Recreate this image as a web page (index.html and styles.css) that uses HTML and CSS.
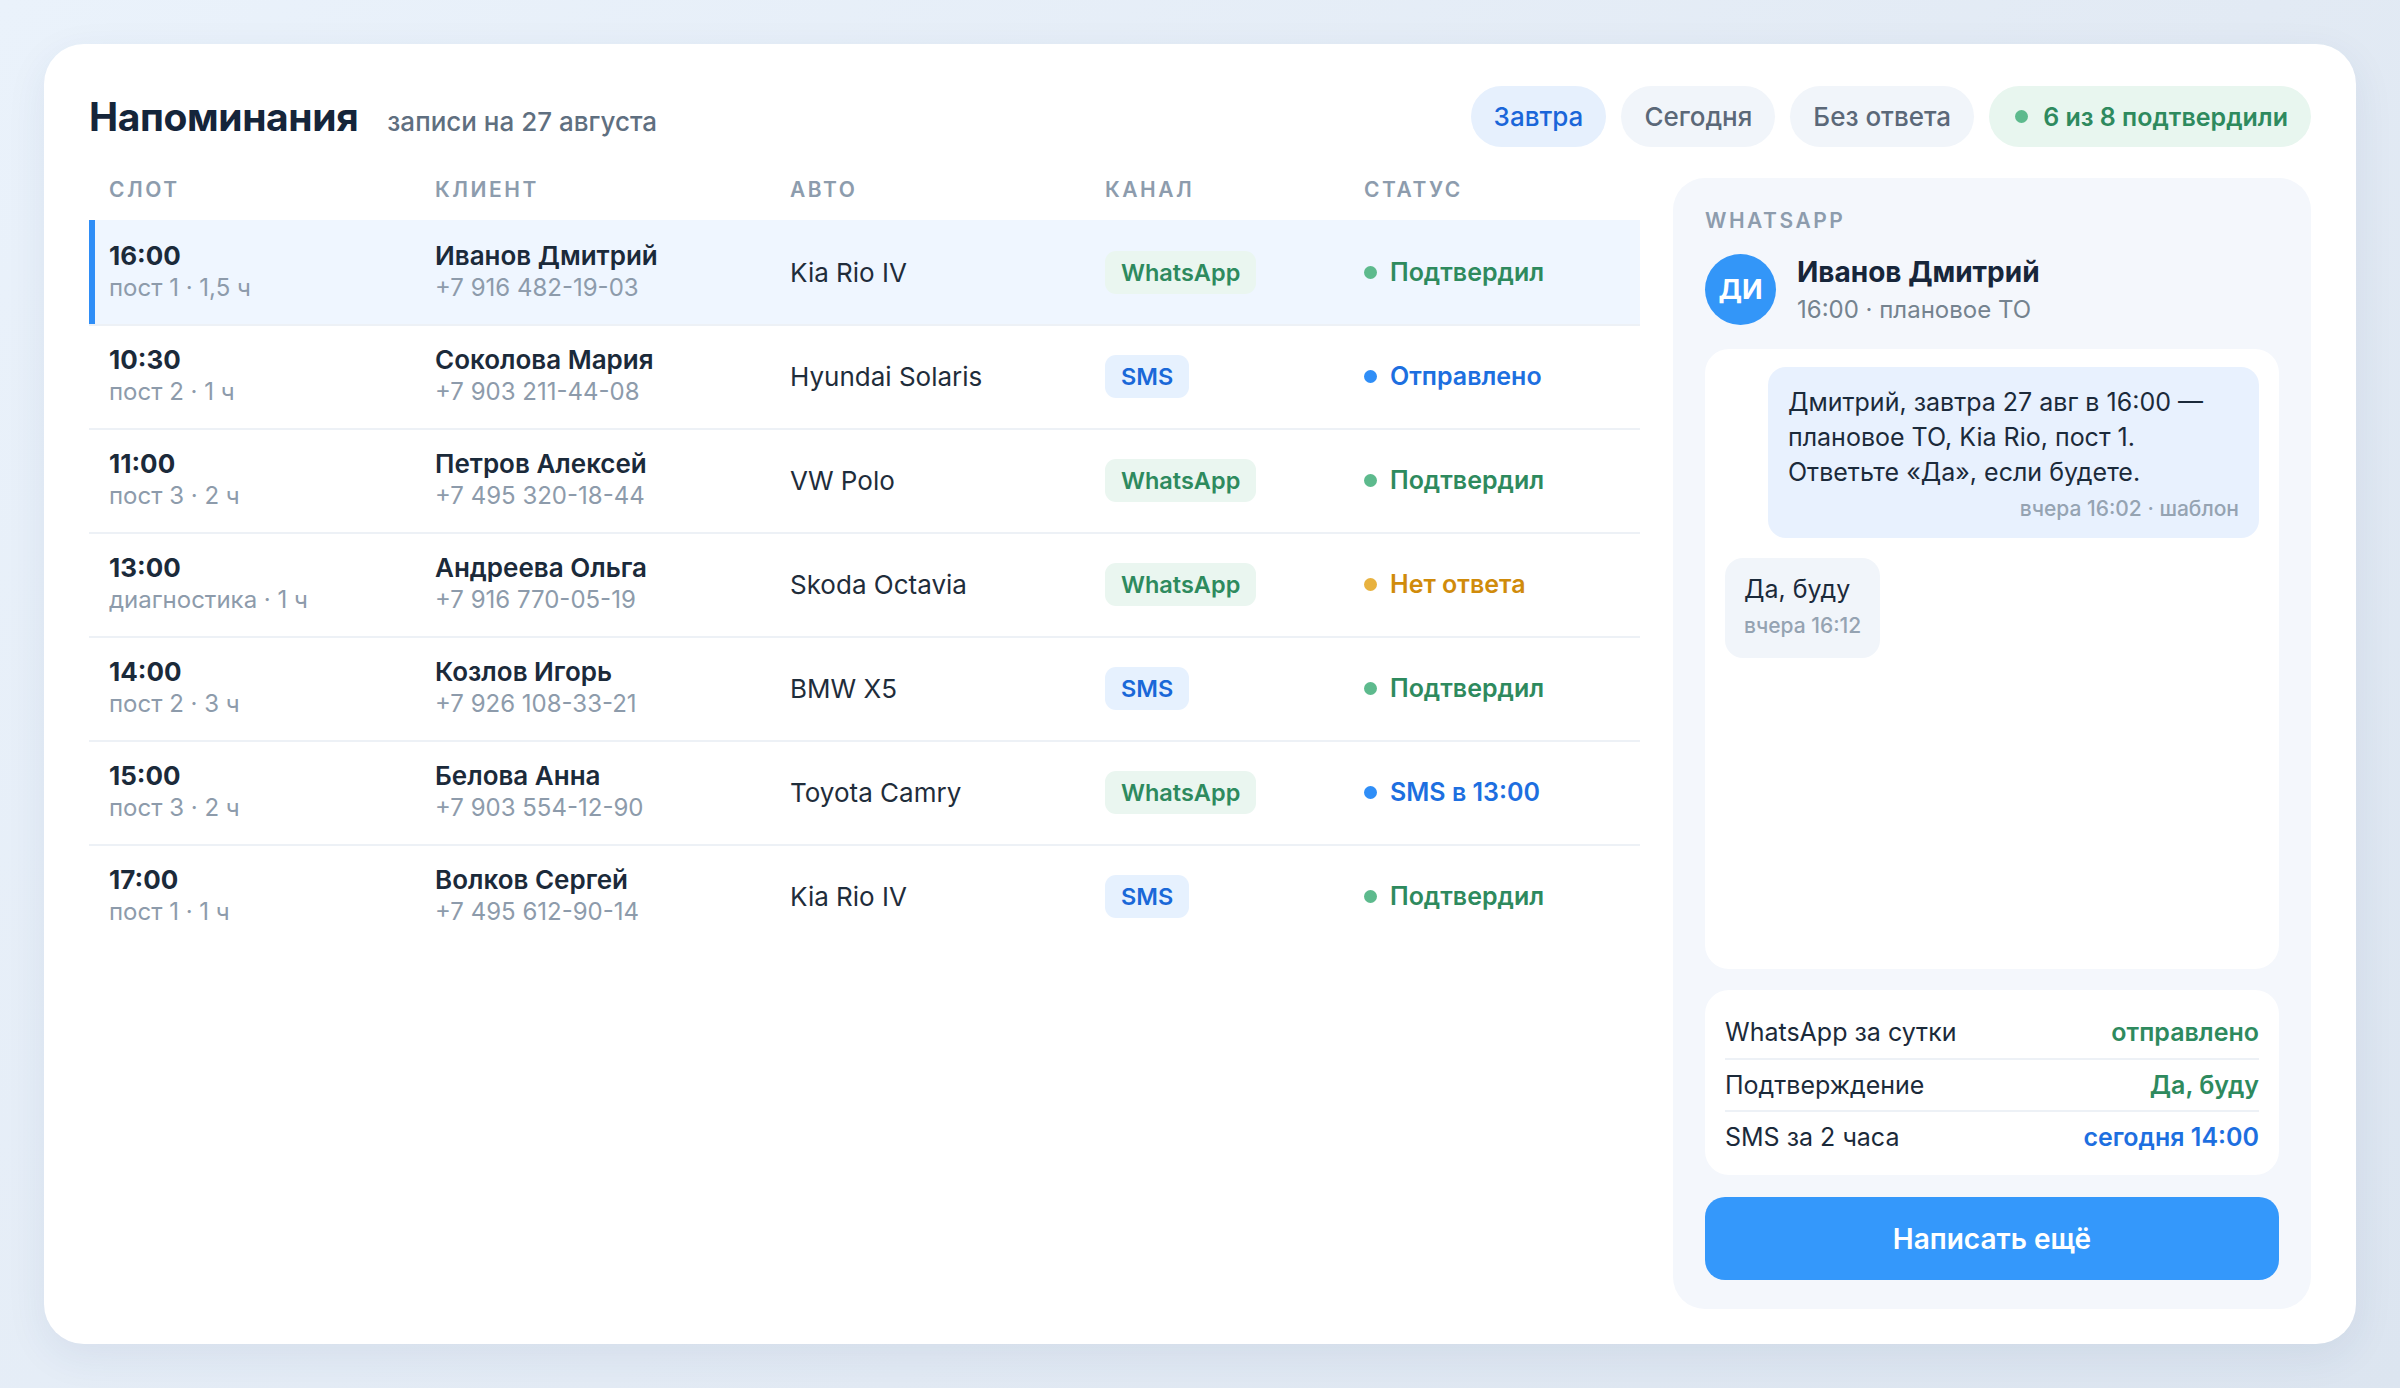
FILE: index.html
```html
<!DOCTYPE html>
<html lang="ru">
<head>
    <meta charset="UTF-8">
    <meta name="viewport" content="width=device-width, initial-scale=1.0">
    <title>Напоминания</title>
    <link rel="stylesheet" href="styles.css">
</head>
<body>
    <div class="card">
        <!-- Header -->
        <div class="top">
            <div class="heading">
                <h1>Напоминания</h1>
                <span class="subtitle">записи на 27 августа</span>
            </div>
            <div class="filters">
                <span class="pill active">Завтра</span>
                <span class="pill">Сегодня</span>
                <span class="pill">Без ответа</span>
                <span class="pill summary"><i class="dot green"></i>6 из 8 подтвердили</span>
            </div>
        </div>

        <div class="content">
            <table class="slots">
                <colgroup>
                    <col style="width:326px">
                    <col style="width:355px">
                    <col style="width:315px">
                    <col style="width:259px">
                    <col style="width:296px">
                </colgroup>
                <thead>
                    <tr>
                        <th>Слот</th>
                        <th>Клиент</th>
                        <th>Авто</th>
                        <th>Канал</th>
                        <th>Статус</th>
                    </tr>
                </thead>
                <tbody>
                    <tr class="selected">
                        <td><div class="main time">16:00</div><div class="meta">пост 1 · 1,5 ч</div></td>
                        <td><div class="main">Иванов Дмитрий</div><div class="meta">+7 916 482-19-03</div></td>
                        <td class="car">Kia Rio IV</td>
                        <td><span class="badge wa">WhatsApp</span></td>
                        <td><span class="status ok"><i class="dot green"></i>Подтвердил</span></td>
                    </tr>
                    <tr>
                        <td><div class="main time">10:30</div><div class="meta">пост 2 · 1 ч</div></td>
                        <td><div class="main">Соколова Мария</div><div class="meta">+7 903 211-44-08</div></td>
                        <td class="car">Hyundai Solaris</td>
                        <td><span class="badge sms">SMS</span></td>
                        <td><span class="status sent"><i class="dot blue"></i>Отправлено</span></td>
                    </tr>
                    <tr>
                        <td><div class="main time">11:00</div><div class="meta">пост 3 · 2 ч</div></td>
                        <td><div class="main">Петров Алексей</div><div class="meta">+7 495 320-18-44</div></td>
                        <td class="car">VW Polo</td>
                        <td><span class="badge wa">WhatsApp</span></td>
                        <td><span class="status ok"><i class="dot green"></i>Подтвердил</span></td>
                    </tr>
                    <tr>
                        <td><div class="main time">13:00</div><div class="meta">диагностика · 1 ч</div></td>
                        <td><div class="main">Андреева Ольга</div><div class="meta">+7 916 770-05-19</div></td>
                        <td class="car">Skoda Octavia</td>
                        <td><span class="badge wa">WhatsApp</span></td>
                        <td><span class="status wait"><i class="dot amber"></i>Нет ответа</span></td>
                    </tr>
                    <tr>
                        <td><div class="main time">14:00</div><div class="meta">пост 2 · 3 ч</div></td>
                        <td><div class="main">Козлов Игорь</div><div class="meta">+7 926 108-33-21</div></td>
                        <td class="car">BMW X5</td>
                        <td><span class="badge sms">SMS</span></td>
                        <td><span class="status ok"><i class="dot green"></i>Подтвердил</span></td>
                    </tr>
                    <tr>
                        <td><div class="main time">15:00</div><div class="meta">пост 3 · 2 ч</div></td>
                        <td><div class="main">Белова Анна</div><div class="meta">+7 903 554-12-90</div></td>
                        <td class="car">Toyota Camry</td>
                        <td><span class="badge wa">WhatsApp</span></td>
                        <td><span class="status sent"><i class="dot blue"></i>SMS в 13:00</span></td>
                    </tr>
                    <tr>
                        <td><div class="main time">17:00</div><div class="meta">пост 1 · 1 ч</div></td>
                        <td><div class="main">Волков Сергей</div><div class="meta">+7 495 612-90-14</div></td>
                        <td class="car">Kia Rio IV</td>
                        <td><span class="badge sms">SMS</span></td>
                        <td><span class="status ok"><i class="dot green"></i>Подтвердил</span></td>
                    </tr>
                </tbody>
            </table>

            <!-- Conversation panel -->
            <aside class="panel">
                <div class="panel-label">WhatsApp</div>
                <div class="contact">
                    <div class="avatar">ДИ</div>
                    <div>
                        <div class="contact-name">Иванов Дмитрий</div>
                        <div class="contact-sub">16:00 · плановое ТО</div>
                    </div>
                </div>

                <div class="chat">
                    <div class="bubble out">
                        <div class="bubble-text">Дмитрий, завтра 27 авг в 16:00 — плановое ТО, Kia Rio, пост 1. Ответьте «Да», если будете.</div>
                        <div class="bubble-meta">вчера 16:02 · шаблон</div>
                    </div>
                    <div class="bubble in">
                        <div class="bubble-text">Да, буду</div>
                        <div class="bubble-meta">вчера 16:12</div>
                    </div>
                </div>

                <div class="info">
                    <div class="info-row"><span>WhatsApp за сутки</span><b class="green-text">отправлено</b></div>
                    <div class="info-row"><span>Подтверждение</span><b class="green-text">Да, буду</b></div>
                    <div class="info-row"><span>SMS за 2 часа</span><b class="blue-text">сегодня 14:00</b></div>
                </div>

                <button class="write-btn">Написать ещё</button>
            </aside>
        </div>
    </div>
</body>
</html>
```

FILE: styles.css
```css
* {
    box-sizing: border-box;
}
body {
    margin: 0;
    padding: 44px;
    height: 1388px;
    font-family: Inter, "Noto Sans", sans-serif;
    color: #1b2a3a;
    background: linear-gradient(135deg, #eaf2fb 0%, #e2eaf4 60%, #dce5f0 100%);
}
.card {
    height: 1300px;
    background: #fff;
    border-radius: 40px;
    padding: 42px 45px 0 45px;
    box-shadow: 0 12px 40px rgba(40, 70, 110, 0.08);
}

/* Header */
.top {
    display: flex;
    justify-content: space-between;
    align-items: center;
    height: 61px;
}
.heading {
    display: flex;
    align-items: baseline;
    gap: 29px;
}
h1 {
    margin: 0;
    font-size: 39px;
    font-weight: 700;
    color: #15253a;
    letter-spacing: -0.01em;
}
.subtitle {
    font-size: 26px;
    font-weight: 500;
    color: #5f6f80;
}
.filters {
    display: flex;
    gap: 15px;
}
.pill {
    display: inline-flex;
    align-items: center;
    height: 61px;
    padding: 0 23px;
    border-radius: 31px;
    font-size: 26px;
    font-weight: 500;
    color: #5b6878;
    background: #f1f5fa;
}
.pill.active {
    color: #1a66d9;
    background: #e6f0fd;
}
.pill.summary {
    gap: 15px;
    padding: 0 23px 0 26px;
    color: #2e8a5e;
    font-size: 25px;
    font-weight: 600;
    background: #e8f6ef;
}
.dot {
    display: inline-block;
    width: 13px;
    height: 13px;
    border-radius: 50%;
    flex-shrink: 0;
}
.dot.green { background: #5dba8d; }
.dot.blue { background: #2f8ef7; }
.dot.amber { background: #e8b23f; }

/* Table */
.content {
    display: flex;
    align-items: flex-start;
    gap: 33px;
    margin-top: 31px;
}
.slots {
    width: 1551px;
    table-layout: fixed;
    border-collapse: collapse;
}
.slots th {
    text-align: left;
    padding: 2px 20px 20px;
    font-size: 21px;
    line-height: 20px;
    font-weight: 600;
    letter-spacing: 0.12em;
    text-transform: uppercase;
    color: #8d9cad;
}
.slots td {
    padding: 20px;
    vertical-align: middle;
}
.slots tbody tr + tr td {
    box-shadow: inset 0 2px 0 #edf1f6;
}
.slots tr.selected td {
    background: #eff6ff;
}
.slots tr.selected td:first-child {
    box-shadow: inset 6px 0 0 #2f8ef7;
}
.main {
    font-size: 26px;
    line-height: 32px;
    font-weight: 600;
    color: #1b2a3a;
}
.main.time {
    font-weight: 700;
}
.meta {
    font-size: 24px;
    line-height: 32px;
    color: #8d9bab;
}
.car {
    font-size: 26px;
    color: #1f2d3b;
}
.badge {
    display: inline-block;
    padding: 8px 16px;
    border-radius: 11px;
    font-size: 23.5px;
    line-height: 27px;
    font-weight: 600;
}
.badge.wa {
    color: #2e8a5e;
    background: #eaf6f0;
}
.badge.sms {
    color: #1a68d8;
    background: #e6f1fe;
}
.status {
    display: inline-flex;
    align-items: center;
    gap: 13px;
    font-size: 25px;
    font-weight: 600;
}
.status.ok { color: #2e8a5e; }
.status.sent { color: #1d6fe0; }
.status.wait { color: #d08b0b; }

/* Side panel */
.panel {
    width: 638px;
    flex-shrink: 0;
    display: flex;
    flex-direction: column;
    padding: 32px 32px 29px;
    border-radius: 32px;
    background: #f4f7fc;
}
.panel-label {
    font-size: 21px;
    line-height: 22px;
    font-weight: 600;
    letter-spacing: 0.12em;
    text-transform: uppercase;
    color: #8d9cad;
}
.contact {
    display: flex;
    align-items: center;
    gap: 21px;
    margin-top: 22px;
}
.avatar {
    width: 71px;
    height: 71px;
    border-radius: 50%;
    background: #3396f8;
    color: #fff;
    font-size: 27px;
    font-weight: 700;
    display: flex;
    align-items: center;
    justify-content: center;
}
.contact-name {
    font-size: 28px;
    line-height: 34px;
    font-weight: 700;
    color: #17263a;
}
.contact-sub {
    margin-top: 6px;
    font-size: 24px;
    line-height: 30px;
    color: #75838f;
}
.chat {
    height: 620px;
    margin-top: 24px;
    padding: 18px 20px;
    background: #fff;
    border-radius: 24px;
    display: flex;
    flex-direction: column;
    gap: 20px;
}
.bubble {
    border-radius: 18px;
}
.bubble.out {
    align-self: flex-end;
    width: 491px;
    padding: 18px 20px 16px;
    background: #e8f1fe;
}
.bubble.in {
    align-self: flex-start;
    padding: 14px 19px 19px;
    background: #f1f5fa;
}
.bubble-text {
    font-size: 25px;
    line-height: 35px;
    color: #1b2a3a;
}
.bubble-meta {
    margin-top: 6px;
    font-size: 21px;
    line-height: 26px;
    font-weight: 500;
    color: #95a3b2;
}
.bubble.out .bubble-meta {
    text-align: right;
}
.info {
    margin-top: 21px;
    padding: 16px 20px 13px;
    background: #fff;
    border-radius: 24px;
}
.info-row {
    display: flex;
    justify-content: space-between;
    align-items: center;
    height: 52px;
    font-size: 25px;
    color: #1b2a3a;
}
.info-row + .info-row {
    border-top: 2px solid #edf1f6;
}
.info-row b {
    font-weight: 600;
}
.green-text { color: #2e8a5e; }
.blue-text { color: #1d6fe0; }
.write-btn {
    margin-top: 22px;
    height: 83px;
    border: none;
    border-radius: 20px;
    background: #3498fb;
    color: #fff;
    font-family: inherit;
    font-size: 28px;
    font-weight: 600;
    cursor: pointer;
}
```
